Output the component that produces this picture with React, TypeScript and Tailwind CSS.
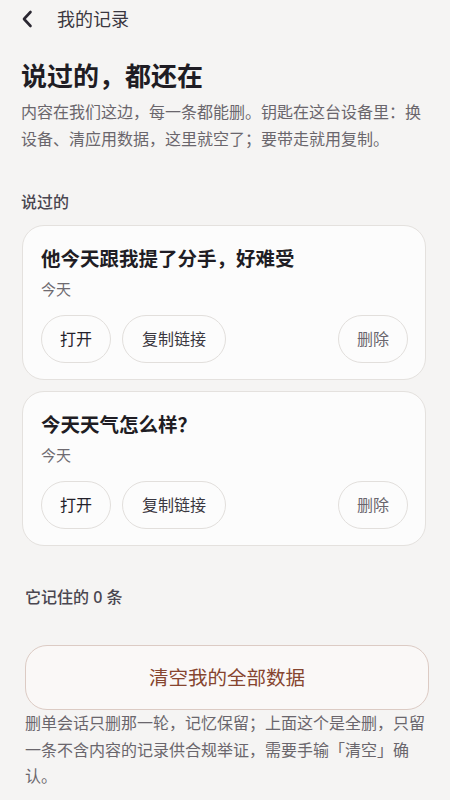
import React from "react";

const font = { fontFamily: '"Noto Sans", "Noto Sans CJK SC", sans-serif' };

function Card({ title }: { title: string }) {
  return (
    <div className="rounded-[22px] border border-[#e4e1de] bg-[#fcfcfc] px-[18px] pt-[19px] pb-[16px]">
      <div className="text-[19.5px] font-semibold leading-[28px] text-[#1f1d24]">{title}</div>
      <div className="mt-[5px] text-[15px] leading-[22px] text-[#6e6a70]">今天</div>
      <div className="mt-[15px] flex items-center">
        <button className="h-[48px] w-[70px] rounded-full border border-[#e2dfdc] bg-[#fcfcfc] text-[16px] font-normal text-[#24212b]">
          打开
        </button>
        <button className="ml-[11px] h-[48px] w-[104px] rounded-full border border-[#e2dfdc] bg-[#fcfcfc] text-[16px] font-normal text-[#3a3740]">
          复制链接
        </button>
        <button className="ml-auto mr-[-1px] h-[48px] w-[70px] rounded-full border border-[#e2dfdc] bg-[#fcfcfc] text-[16px] text-[#6a666e]">
          删除
        </button>
      </div>
    </div>
  );
}

export default function App() {
  return (
    <div className="min-h-[800px] w-[450px] bg-[#f5f4f3]" style={font}>
      <div className="flex h-[37px] items-center pl-[21px]">
        <svg width="12" height="18" viewBox="0 0 12 18" fill="none">
          <path d="M9.5 2 L3 9 L9.5 16" stroke="#2a2731" strokeWidth="2.6" strokeLinecap="round" strokeLinejoin="round" />
        </svg>
        <div className="ml-[24px] text-[18px] leading-[24px] text-[#3a3740]">我的记录</div>
      </div>
      <div className="px-[21px]">
        <h1 className="mt-[22px] text-[26px] font-bold leading-[34px] text-[#1f1d24]">说过的，都还在</h1>
        <p className="mt-[6px] text-[16px] leading-[27px] text-[#6a666c]">
          内容在我们这边，每一条都能删。钥匙在这台设备里：换设备、清应用数据，这里就空了；要带走就用复制。
        </p>
        <div className="mt-[37px] text-[16px] font-medium leading-[24px] text-[#4a4650]">说过的</div>
        <div className="mt-[11px] flex flex-col gap-[11px] pl-[1px] pr-[3px]">
          <Card title="他今天跟我提了分手，好难受" />
          <Card title="今天天气怎么样？" />
        </div>
        <div className="mt-[39px] pl-[4px] text-[16px] font-medium leading-[24px] text-[#4a4650]">它记住的 0 条</div>
        <div className="pl-[4px] pr-0">
          <button className="mt-[36px] flex h-[65px] w-full items-center justify-center rounded-[22px] border border-[#dccbc4] bg-[#faf8f7] text-[19.5px] text-[#86452f]">
            清空我的全部数据
          </button>
          <p className="mt-0 text-[16px] leading-[26.5px] text-[#6a666c]">
            删单会话只删那一轮，记忆保留；上面这个是全删，只留一条不含内容的记录供合规举证，需要手输「清空」确认。
          </p>
        </div>
      </div>
    </div>
  );
}
